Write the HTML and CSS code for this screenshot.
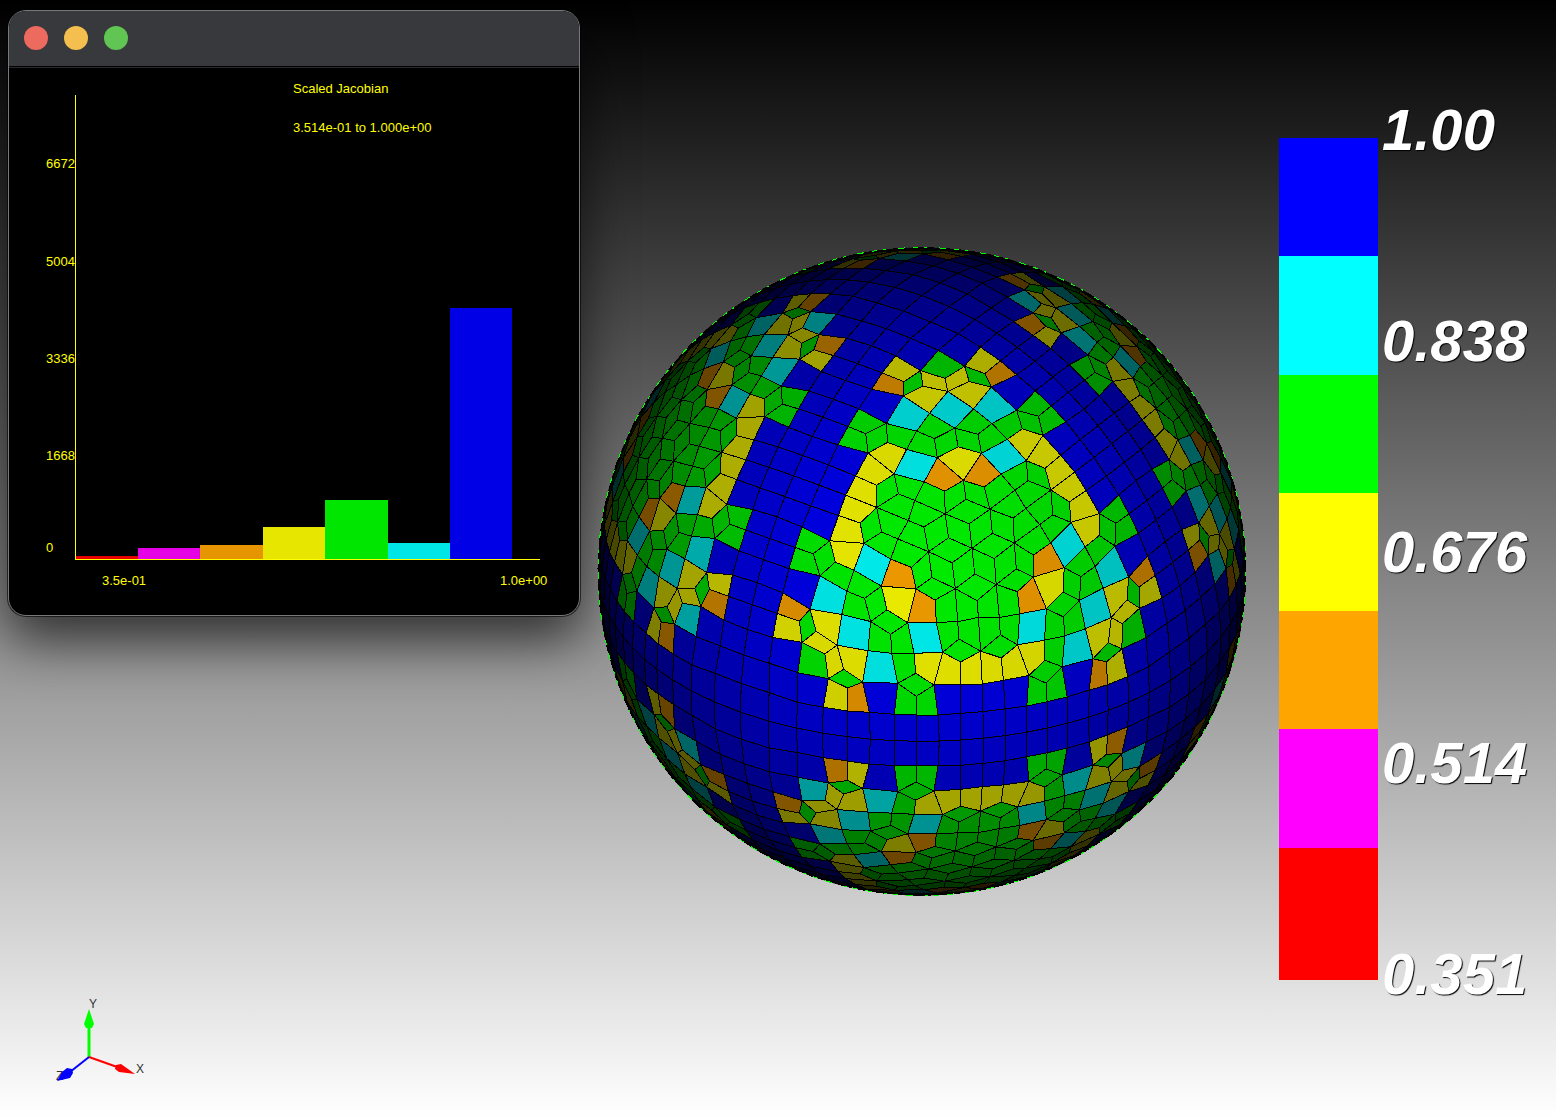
FILE: index.html
```html
<!DOCTYPE html>
<html lang="en">
<head>
<meta charset="utf-8">
<title>Scaled Jacobian</title>
<link rel="stylesheet" href="styles.css">
</head>
<body>
<main class="viewer">
  <div class="side">
    <section class="window">
      <header class="titlebar">
        <button class="dot close" type="button" aria-label="Close"></button>
        <button class="dot minimize" type="button" aria-label="Minimize"></button>
        <button class="dot zoom" type="button" aria-label="Zoom"></button>
      </header>
      <svg class="chart" viewBox="9 68 570 547" role="img" aria-label="Scaled Jacobian histogram">
        <g class="bars">
          <rect x="76" y="556" width="62" height="3" fill="#e60000"/>
          <rect x="138" y="548" width="62" height="11" fill="#e600e6"/>
          <rect x="200" y="545" width="63" height="14" fill="#e69500"/>
          <rect x="263" y="527" width="62" height="32" fill="#e6e600"/>
          <rect x="325" y="500" width="63" height="59" fill="#00e600"/>
          <rect x="388" y="543" width="62" height="16" fill="#00e6e6"/>
          <rect x="450" y="308" width="62" height="251" fill="#0000e6"/>
        </g>
        <rect class="axis" x="75" y="95" width="1" height="464"/>
        <rect class="axis" x="75" y="559" width="465" height="1"/>
        <g class="chart-text">
          <text x="293" y="93">Scaled Jacobian</text>
          <text x="293" y="132">3.514e-01 to 1.000e+00</text>
          <text x="46" y="168">6672</text>
          <text x="46" y="266">5004</text>
          <text x="46" y="363">3336</text>
          <text x="46" y="460">1668</text>
          <text x="46" y="552">0</text>
          <text x="102" y="585">3.5e-01</text>
          <text x="500" y="585">1.0e+00</text>
        </g>
      </svg>
    </section>
    <svg class="triad" viewBox="50 990 100 100" role="img" aria-label="Axes">
      <text x="56" y="1080">Z</text>
      <path d="M89 1057V1025" stroke="#0f0" stroke-width="3"/>
      <path d="M89 1009L94 1024L92 1028H86L84 1024Z" fill="#0f0"/>
      <path d="M89 1057L120 1068" stroke="#f00" stroke-width="2"/>
      <path d="M135 1074L119 1072L115 1069L116 1065L121 1064Z" fill="#f00"/>
      <path d="M89 1057L70 1072" stroke="#00f" stroke-width="2"/>
      <path d="M57 1081L62 1072L67 1068L72 1069L73 1073L70 1078Z" fill="#00f"/>
      <text x="89" y="1008">Y</text>
      <text x="136" y="1073">X</text>
    </svg>
  </div>
  <div class="scene">
    <svg class="sphere" id="sphere" viewBox="596 246 652 652" role="img" aria-label="Sphere mesh"></svg>
  </div>
  <aside class="legend">
    <div class="scale">
      <span class="band blue"></span>
      <span class="band cyan"></span>
      <span class="band green"></span>
      <span class="band yellow"></span>
      <span class="band orange"></span>
      <span class="band magenta"></span>
      <span class="band red"></span>
    </div>
    <div class="ticks">
      <span>1.00</span>
      <span>0.838</span>
      <span>0.676</span>
      <span>0.514</span>
      <span>0.351</span>
    </div>
  </aside>
</main>
<script src="mesh.js"></script>
</body>
</html>
```
FILE: styles.css
```css
* { box-sizing: border-box; }

body {
  margin: 0;
  font-family: "Liberation Sans", sans-serif;
  color: #fff;
}

.viewer {
  display: grid;
  grid-template-columns: 588px 1fr 300px;
  min-height: 100vh;
  background: linear-gradient(#000, #fff);
}

.side {
  display: flex;
  flex-direction: column;
  justify-content: space-between;
  padding: 10px 8px 28px;
}

.window {
  overflow: hidden;
  border: 1px solid #77787b;
  border-radius: 18px;
  background: #000;
  box-shadow: 0 0 0 1px rgba(0, 0, 0, .6), 0 24px 52px rgba(0, 0, 0, .65);
}

.titlebar {
  display: flex;
  gap: 16px;
  height: 57px;
  padding: 15px;
  background: #38393d;
  border-bottom: 1px solid #2a2a2c;
  box-shadow: inset 0 -1px #000;
}

.dot {
  width: 24px;
  height: 24px;
  padding: 0;
  border: 0;
  border-radius: 50%;
}

.close { background: #ed6a5e; }
.minimize { background: #f5bf4f; }
.zoom { background: #61c554; }

.chart {
  display: block;
  width: 100%;
}

.bars, .axis { shape-rendering: crispEdges; }
.axis { fill: #ff0; }
.chart-text { fill: #ff0; font-size: 13px; }

.triad {
  width: 100px;
  height: 100px;
  margin-left: 42px;
}

.triad text {
  fill: #333;
  font-size: 12px;
}

.scene {
  display: flex;
  align-items: center;
  justify-content: center;
  padding-top: 26px;
}

.sphere {
  width: 652px;
  max-width: 100%;
}

.mesh { stroke: #000; shape-rendering: crispEdges; }
.limb { fill: none; stroke: #000; stroke-width: 2; }
.glint { fill: none; stroke: #0f0; stroke-dasharray: 5 6 3 12 7 8; shape-rendering: crispEdges; }

.legend {
  display: flex;
  padding: 108px 0 122px 23px;
}

.scale {
  display: flex;
  flex-direction: column;
  width: 99px;
  margin: 30px 0 16px;
}

.band { flex: 118; }
.blue { background: #00f; }
.cyan { background: #0ff; }
.green { background: #0f0; }
.yellow { background: #ff0; }
.orange { background: #ffa500; }
.magenta { background: #f0f; }
.red { background: #f00; flex: 132; }

.ticks {
  display: flex;
  flex-direction: column;
  justify-content: space-between;
  padding-left: 4px;
  font: italic bold 58px/44px "Liberation Sans", sans-serif;
  text-shadow: 1px 1px 1px #000;
}
```
FILE: mesh.js
```js
// Sphere in view space: centre and radius in viewBox units, camera azimuth and elevation.
const CX = 922, CY = 571.5, R = 324;
const az = 34.1 * Math.PI / 180, el = 31.6 * Math.PI / 180;
const ca = Math.cos(az), sa = Math.sin(az), ce = Math.cos(el), se = Math.sin(el);
const right = [ca, 0, -sa];
const up = [-se * sa, ce, -se * ca];
const eye = [ce * sa, se, ce * ca];
const dot = (a, b) => a[0] * b[0] + a[1] * b[1] + a[2] * b[2];

// Vertices of one forty-eighth of the sphere, in thirds of a unit from (810, 460).
const points = {
  h: [488, 265], a: [495, 342], b: [427, 309], k: [436, 386], c: [503, 422], f: [367, 354],
  g: [319, 388], p: [375, 420], q: [379, 487], r: [443, 485], s: [506, 472], t: [447, 537],
  u: [514, 573], v: [398, 577], w: [452, 606], x: [293, 488], y: [233, 452], z: [312, 580],
  A: [242, 523], B: [183, 486], C: [245, 580], D: [174, 572], E: [83, 558], F: [317, 640],
  G: [263, 670], I: [372, 675], J: [319, 709], N: [158, 666], O: [101, 628], P: [113, 684],
  Q: [55, 656], R: [46, 583], S: [-33, 643], w1: [452, 674], u1: [518, 672],
  A1: [-123, 697], A2: [-38, 727], A3: [40, 742], A4: [113, 753], A5: [178, 757],
  A6: [253, 763], A7: [319, 765], A8: [384, 765], A9: [452, 760], A10: [518, 755],
  B0: [-210, 756], B1: [-125, 783], B2: [-40, 806], B3: [37, 819], B4: [113, 832],
  B5: [181, 840], B6: [253, 845], B7: [319, 844], B8: [388, 842], B9: [453, 838], B10: [519, 834]
};

// Faces by quality class, "first octant/other octants" where the two differ.
// In a face, ' mirrors a vertex in x = y and ^ mirrors it in x = z.
const faces = {
  "green": ["h a k b", "k a k^ c", "k b k' f", "k c s r", "k r q p", "f k p g", "r t v q",
    "r s u t", "t u w v", "x A B y", "x z C A", "A C D B", "C z F G", "O N P Q",
    "F I J G", "G J A7 A6", "J I A8 A7"],
  "yellow": ["v w w1 I", "w u u1 w1", "z v I F", "g x y x'", "E D N O", "E O Q R"],
  "cyan": ["q v z x", "B D E D'", "D C G N"],
  "orange": ["p q x g"],
  "blue": ["N G A6 A5", "I w1 A9 A8", "w1 u1 A10 A9", "S Q A3 A2", "S A2 A1 A2'", "A1 B1 B0 B1'"],
  "green/cyan": ["R Q S Q'"],
  "yellow/orange": ["P Q A3 A4"],
  "orange/yellow": ["P N A5 A4"]
};
for (let i = 1; i < 10; i++) faces.blue.push(`A${i} A${i + 1} B${i + 1} B${i}`);

const colors = {
  green: [0, 255, 0], yellow: [255, 255, 0], cyan: [0, 255, 255],
  orange: [255, 165, 0], blue: [0, 0, 255]
};

// Lift a point onto the sphere and pull it onto a symmetry plane that it nearly touches.
function lift([px, py]) {
  const u = (810 + px / 3 - CX) / R, v = (CY - 460 - py / 3) / R;
  const w = Math.sqrt(1 - u * u - v * v);
  let [x, y, z] = [0, 1, 2].map(i => u * right[i] + v * up[i] + w * eye[i]);
  const near = 0.02;
  if (Math.abs(x) < near) x = 0;
  if (Math.abs(y) < near) y = 0;
  if (Math.abs(x - y) < near) x = y = (x + y) / 2;
  if (Math.abs(x - z) < near) {
    if (x === y) x = y = z = (x + y + z) / 3;
    else x = z = (x + z) / 2;
  }
  const n = Math.hypot(x, y, z);
  return [x / n, y / n, z / n];
}

const lifted = {};
for (const name in points) lifted[name] = lift(points[name]);

function vertex(ref) {
  const [x, y, z] = lifted[ref.replace(/['^]/, "")];
  if (ref.endsWith("'")) return [y, x, z];
  if (ref.endsWith("^")) return [z, y, x];
  return [x, y, z];
}

const orders = [[0, 1, 2], [0, 2, 1], [1, 0, 2], [1, 2, 0], [2, 0, 1], [2, 1, 0]];
const seen = new Set();
let mesh = "";
for (const kind in faces) {
  const [first, other = first] = kind.split("/");
  for (const face of faces[kind]) {
    const corners = face.split(" ").map(vertex);
    for (const order of orders) {
      for (let s = 0; s < 8; s++) {
        const signs = [s & 1 ? -1 : 1, s & 2 ? -1 : 1, s & 4 ? -1 : 1];
        const pts = corners.map(c => order.map((o, i) => c[o] * signs[i]));
        const mid = [0, 1, 2].map(i => pts.reduce((t, p) => t + p[i], 0) / pts.length);
        const facing = dot(mid, eye) / Math.hypot(...mid);
        const key = mid.map(m => Math.round(m * 1000)).join();
        if (facing <= 0 || seen.has(key)) continue;
        seen.add(key);
        const rgb = colors[s ? other : first].map(c => Math.round(c * 0.92 * facing));
        const path = pts.map(p =>
          (CX + R * dot(p, right)).toFixed(1) + "," + (CY - R * dot(p, up)).toFixed(1)).join(" ");
        mesh += `<polygon points="${path}" fill="rgb(${rgb})"/>`;
      }
    }
  }
}
document.getElementById("sphere").innerHTML =
  `<circle cx="${CX}" cy="${CY}" r="323"/><g class="mesh">${mesh}</g>` +
  `<circle class="limb" cx="${CX}" cy="${CY}" r="323"/>` +
  `<circle class="glint" cx="${CX}" cy="${CY}" r="324"/>`;
```
